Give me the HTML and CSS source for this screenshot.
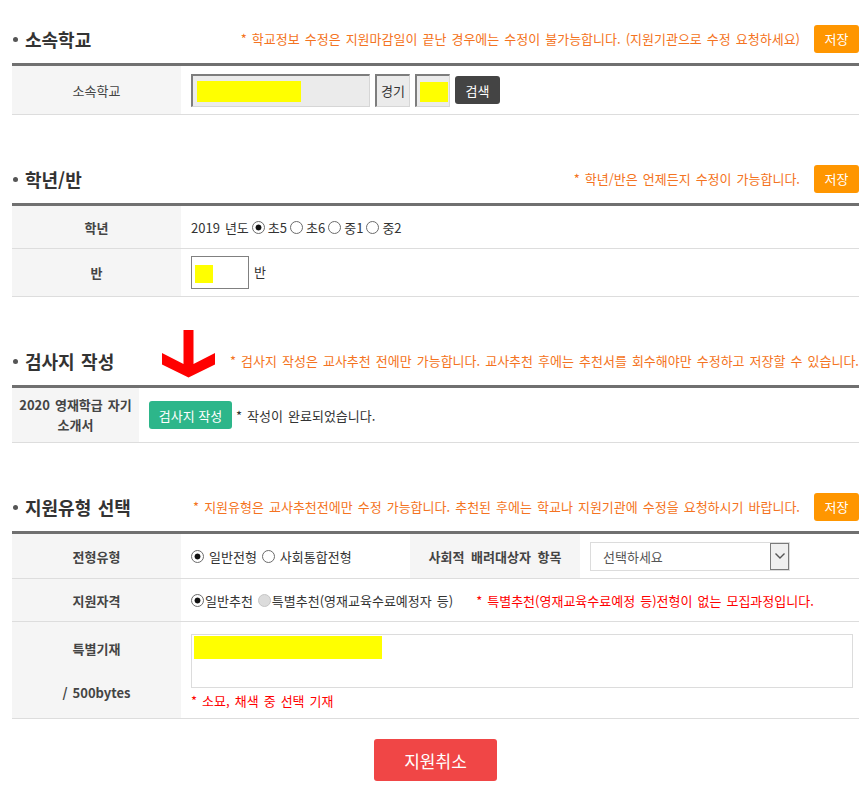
FILE: index.html
```html
<!DOCTYPE html>
<html lang="ko">
<head>
<meta charset="utf-8">
<title>지원서</title>
<link rel="stylesheet" href="styles.css">
</head>
<body>
<div class="page">

  <section class="sec">
    <div class="sec-head">
      <h3 class="sec-title">소속학교</h3>
      <p class="note">* 학교정보 수정은 지원마감일이 끝난 경우에는 수정이 불가능합니다. (지원기관으로 수정 요청하세요)</p>
      <button class="btn-save" type="button">저장</button>
    </div>
    <div class="tbl">
      <div class="row row-school">
        <div class="th th-normal">소속학교</div>
        <div class="td">
          <div class="field field-school"><span class="mask mask-school"></span></div>
          <div class="field field-region">경기</div>
          <div class="field field-code"><span class="mask mask-code"></span></div>
          <button class="btn-search" type="button">검색</button>
        </div>
      </div>
    </div>
  </section>

  <section class="sec">
    <div class="sec-head">
      <h3 class="sec-title">학년/반</h3>
      <p class="note">* 학년/반은 언제든지 수정이 가능합니다.</p>
      <button class="btn-save" type="button">저장</button>
    </div>
    <div class="tbl">
      <div class="row row-grade">
        <div class="th">학년</div>
        <div class="td">
          <span class="year">2019 년도</span>
          <label class="opt opt-grade"><input type="radio" class="rd" name="grade" checked>초5</label>
          <label class="opt opt-grade"><input type="radio" class="rd" name="grade">초6</label>
          <label class="opt opt-grade"><input type="radio" class="rd" name="grade">중1</label>
          <label class="opt opt-grade"><input type="radio" class="rd" name="grade">중2</label>
        </div>
      </div>
      <div class="row row-class">
        <div class="th">반</div>
        <div class="td">
          <div class="class-box"><span class="mask mask-class"></span></div>
          <span class="class-unit">반</span>
        </div>
      </div>
    </div>
  </section>

  <section class="sec">
    <div class="sec-head">
      <h3 class="sec-title">검사지 작성</h3>
      <svg class="arrow" width="53" height="48" viewBox="0 0 53 48" aria-hidden="true">
        <polygon fill="#ff0000" points="21.5,0 31.5,0 31.5,34 53,23 53,34.5 26.5,47.5 0,34.5 0,23 21.5,34"/>
      </svg>
      <p class="note">* 검사지 작성은 교사추천 전에만 가능합니다. 교사추천 후에는 추천서를 회수해야만 수정하고 저장할 수 있습니다.</p>
    </div>
    <div class="tbl">
      <div class="row row-survey">
        <div class="th th-narrow">2020 영재학급 자기<br>소개서</div>
        <div class="td">
          <button class="btn-survey" type="button">검사지 작성</button>
          <span class="done">* 작성이 완료되었습니다.</span>
        </div>
      </div>
    </div>
  </section>

  <section class="sec">
    <div class="sec-head">
      <h3 class="sec-title">지원유형 선택</h3>
      <p class="note">* 지원유형은 교사추천전에만 수정 가능합니다. 추천된 후에는 학교나 지원기관에 수정을 요청하시기 바랍니다.</p>
      <button class="btn-save" type="button">저장</button>
    </div>
    <div class="tbl">
      <div class="row row-type">
        <div class="th">전형유형</div>
        <div class="td td-type">
          <label class="opt opt-type"><input type="radio" class="rd" name="type" checked>일반전형</label>
          <label class="opt opt-type"><input type="radio" class="rd" name="type">사회통합전형</label>
        </div>
        <div class="th th-wide">사회적 배려대상자 항목</div>
        <div class="td">
          <div class="select">
            <span class="select-text">선택하세요</span>
            <span class="select-btn">
              <svg width="10" height="6" viewBox="0 0 10 6" aria-hidden="true"><polyline points="0.5,0.5 5,5 9.5,0.5" fill="none" stroke="#555" stroke-width="1.4"/></svg>
            </span>
          </div>
        </div>
      </div>
      <div class="row row-qual">
        <div class="th">지원자격</div>
        <div class="td">
          <label class="opt opt-qual"><input type="radio" class="rd" name="qual" checked>일반추천</label>
          <label class="opt opt-qual"><input type="radio" class="rd" name="qual" disabled>특별추천(영재교육수료예정자 등)</label>
          <span class="warn warn-qual">* 특별추천(영재교육수료예정 등)전형이 없는 모집과정입니다.</span>
        </div>
      </div>
      <div class="row row-memo">
        <div class="th th-memo">특별기재<br><br>/ 500bytes</div>
        <div class="td td-memo">
          <div class="memo"><span class="mask mask-memo"></span></div>
          <span class="warn warn-memo">* 소묘, 채색 중 선택 기재</span>
        </div>
      </div>
    </div>
  </section>

  <div class="actions">
    <button class="btn-cancel" type="button">지원취소</button>
  </div>

</div>
</body>
</html>
```

FILE: styles.css
```css
* {
  box-sizing: border-box;
}

body {
  margin: 0;
  background: #ffffff;
  font-family: "Noto Sans CJK KR", "Noto Sans", sans-serif;
  font-size: 13px;
  word-spacing: 1.4px;
  color: #333333;
}

.page {
  width: 847px;
  margin-left: 12px;
  padding-top: 14px;
}

.sec + .sec {
  margin-top: 39px;
}

/* ---------- section header ---------- */
.sec-head {
  position: relative;
  display: flex;
  align-items: center;
  height: 49px;
}

.sec-title {
  margin: 0;
  display: flex;
  align-items: center;
  font-size: 18px;
  font-weight: 700;
  color: #333333;
  white-space: nowrap;
}

.sec-title::before {
  content: "";
  width: 5px;
  height: 5px;
  border-radius: 50%;
  background: #555555;
  margin: 2px 7px 0 1px;
}

.note {
  margin: 0 0 0 auto;
  font-size: 13px;
  color: #f47321;
  white-space: nowrap;
}

.btn-save {
  flex: 0 0 45px;
  height: 28px;
  margin-left: 14px;
  padding: 0;
  border: 0;
  border-radius: 3px;
  background: #ff9600;
  color: #ffffff;
  font-family: inherit;
  font-size: 13px;
}

.arrow {
  position: absolute;
  left: 150px;
  top: -6px;
}

/* ---------- table ---------- */
.tbl {
  border-top: 3px solid #707070;
}

.row {
  display: flex;
  border-bottom: 1px solid #dddddd;
}

.row-school { height: 49px; }
.row-grade { height: 43px; }
.row-class { height: 48px; }
.row-survey { height: 55px; }
.row-type { height: 45px; }
.row-qual { height: 43px; }
.row-memo { height: 97px; }

.th {
  flex: 0 0 169px;
  display: flex;
  align-items: center;
  justify-content: center;
  text-align: center;
  background: #f5f5f5;
  font-size: 13px;
  font-weight: 700;
  color: #444444;
}

.th-normal {
  font-weight: 400;
}

.th-narrow {
  flex-basis: 127px;
  line-height: 20px;
}

.th-wide {
  flex-basis: 170px;
  word-spacing: 3px;
}

.th-memo {
  line-height: 22px;
  padding-top: 1px;
}

.td {
  flex: 1 1 auto;
  min-width: 0;
  display: flex;
  align-items: center;
  padding-left: 10px;
  color: #333333;
  white-space: nowrap;
}

.td-type {
  flex: 0 0 229px;
}

.td-memo {
  flex-direction: column;
  align-items: flex-start;
  padding: 12px 6px 0 10px;
}

/* ---------- school row ---------- */
.field {
  height: 33px;
  margin-right: 5px;
  background: #ebebeb;
  border-style: solid;
  border-width: 2px 1px 1px 2px;
  border-color: #7d7d7d #d6d6d6 #d6d6d6 #7d7d7d;
}

.field-school {
  width: 179px;
  padding: 5px 0 0 4px;
}

.field-region {
  width: 35px;
  padding-left: 4px;
  line-height: 29px;
  font-size: 13px;
}

.field-code {
  width: 35px;
  padding: 6px 0 0 3px;
}

.mask {
  display: block;
  background: #ffff00;
}

.mask-school {
  width: 104px;
  height: 21px;
}

.mask-code {
  width: 28px;
  height: 20px;
}

.btn-search {
  width: 45px;
  height: 28px;
  padding: 0;
  border: 0;
  border-radius: 3px;
  background: #444444;
  color: #ffffff;
  font-family: inherit;
  font-size: 13px;
}

/* ---------- radios ---------- */
.opt {
  display: inline-flex;
  align-items: center;
  cursor: pointer;
}

.rd {
  -webkit-appearance: none;
  appearance: none;
  flex: 0 0 13px;
  width: 13px;
  height: 13px;
  margin: 0;
  border: 1px solid #6b6b6b;
  border-radius: 50%;
  background: #ffffff;
}

.rd:checked {
  background: radial-gradient(circle, #111111 0 2.6px, #ffffff 3.3px);
}

.rd:disabled {
  border-color: #c6c6c6;
  background: #dcdcdc;
}

.opt-grade {
  margin-left: 3px;
}

.opt-grade .rd {
  margin-right: 3px;
}

.opt-type + .opt-type {
  margin-left: 5px;
}

.opt-type .rd {
  margin-right: 5px;
}

.opt-qual .rd {
  margin-right: 1px;
}

.opt-qual + .opt-qual {
  margin-left: 5px;
}

/* ---------- class row ---------- */
.class-box {
  width: 58px;
  height: 33px;
  border: 1px solid #808080;
  padding: 8px 0 0 3px;
}

.mask-class {
  width: 18px;
  height: 18px;
}

.class-unit {
  margin-left: 5px;
  margin-top: -3px;
}

/* ---------- survey row ---------- */
.btn-survey {
  width: 83px;
  height: 28px;
  padding: 0;
  border: 0;
  border-radius: 3px;
  background: #2db68a;
  color: #ffffff;
  font-family: inherit;
  font-size: 13px;
}

.done {
  margin-left: 4px;
}

/* ---------- type row ---------- */
.select {
  display: flex;
  width: 200px;
  height: 29px;
  border: 1px solid #dcdcdc;
  background: #ffffff;
}

.select-text {
  flex: 1 1 auto;
  padding-left: 12px;
  line-height: 27px;
  color: #555555;
}

.select-btn {
  flex: 0 0 19px;
  display: flex;
  align-items: center;
  justify-content: center;
  border: 1px solid #7a7a7a;
  background: #efefef;
}

/* ---------- warnings ---------- */
.warn {
  color: #ff0000;
}

.warn-qual {
  margin-left: 23px;
}

.memo {
  width: 100%;
  height: 54px;
  border: 1px solid #dcdcdc;
  padding: 1px 0 0 2px;
}

.mask-memo {
  width: 188px;
  height: 23px;
}

.warn-memo {
  margin-top: 5px;
  line-height: 16px;
}

/* ---------- actions ---------- */
.actions {
  display: flex;
  justify-content: center;
  margin-top: 20px;
}

.btn-cancel {
  width: 123px;
  height: 42px;
  padding: 0;
  border: 0;
  border-radius: 3px;
  background: #f04646;
  color: #ffffff;
  font-family: inherit;
  font-size: 17px;
}
```
